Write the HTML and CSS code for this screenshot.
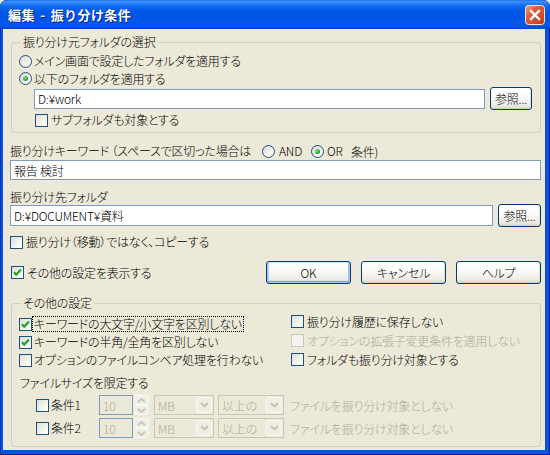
FILE: index.html
```html
<!DOCTYPE html>
<html lang="ja">
<head>
<meta charset="utf-8">
<title>編集 - 振り分け条件</title>
<link rel="stylesheet" href="styles.css">
</head>
<body>
<div class="window">
  <div class="titlebar">
    <span class="title">編集 - 振り分け条件</span>
    <span class="close">
      <svg width="20" height="20" viewBox="0 0 20 20">
        <defs>
          <linearGradient id="cg" x1="0" y1="0" x2="1" y2="1">
            <stop offset="0" stop-color="#EFA48C"/>
            <stop offset="0.35" stop-color="#DE5E3C"/>
            <stop offset="1" stop-color="#C23A17"/>
          </linearGradient>
        </defs>
        <rect x="0.5" y="0.5" width="19" height="19" rx="3" fill="url(#cg)" stroke="#F4E4DE"/>
        <path d="M6 6 L14 14 M14 6 L6 14" stroke="#fff" stroke-width="2.4" stroke-linecap="square"/>
      </svg>
    </span>
  </div>
  <div class="client">
    <div class="group g1">
      <span class="gtitle">振り分け元フォルダの選択</span>
      <div class="row r1"><span class="radio"></span><span class="lbl">メイン画面で設定したフォルダを適用する</span></div>
      <div class="row r2"><span class="radio on"></span><span class="lbl">以下のフォルダを適用する</span></div>
      <div class="row r-input"><span class="edit src">D:¥work</span><span class="btn browse">参照...</span></div>
      <div class="row r-sub"><span class="check"></span><span class="lbl">サブフォルダも対象とする</span></div>
    </div>

    <div class="row kw-row">
      <span class="kw-label">振り分けキーワード （スペースで区切った場合は</span>
      <span class="radio"></span><span class="lat and">AND</span>
      <span class="radio on"></span><span class="lat or">OR</span>
      <span class="kw-tail">条件)</span>
    </div>
    <span class="edit kw">報告 検討</span>

    <div class="row dest-label">振り分け先フォルダ</div>
    <div class="row dest-row"><span class="edit dest">D:¥DOCUMENT¥資料</span><span class="btn browse dbrowse">参照...</span></div>

    <div class="row copy-row"><span class="check"></span><span class="lbl">振り分け（移動）ではなく、コピーする</span></div>

    <div class="row action-row">
      <div class="show-other"><span class="check"><svg width="11" height="11" viewBox="0 0 11 11"><path d="M2 5.2 L4.2 7.6 L9 2.6" fill="none" stroke="#21A121" stroke-width="2.1"/></svg></span><span class="lbl">その他の設定を表示する</span></div>
      <div class="buttons">
        <span class="btn push default">OK</span>
        <span class="btn push">キャンセル</span>
        <span class="btn push">ヘルプ</span>
      </div>
    </div>

    <div class="group g2">
      <span class="gtitle">その他の設定</span>
      <div class="cols">
        <div class="col left">
          <div class="row opt"><span class="check"><svg width="11" height="11" viewBox="0 0 11 11"><path d="M2 5.2 L4.2 7.6 L9 2.6" fill="none" stroke="#21A121" stroke-width="2.1"/></svg></span><span class="lbl focus">キーワードの大文字/小文字を区別しない</span></div>
          <div class="row opt"><span class="check"><svg width="11" height="11" viewBox="0 0 11 11"><path d="M2 5.2 L4.2 7.6 L9 2.6" fill="none" stroke="#21A121" stroke-width="2.1"/></svg></span><span class="lbl">キーワードの半角/全角を区別しない</span></div>
          <div class="row opt"><span class="check"></span><span class="lbl">オプションのファイルコンベア処理を行わない</span></div>
        </div>
        <div class="col right">
          <div class="row opt"><span class="check"></span><span class="lbl">振り分け履歴に保存しない</span></div>
          <div class="row opt disabled"><span class="check"></span><span class="lbl">オプションの拡張子変更条件を適用しない</span></div>
          <div class="row opt"><span class="check"></span><span class="lbl">フォルダも振り分け対象とする</span></div>
        </div>
      </div>
      <div class="row size-label">ファイルサイズを限定する</div>
      <div class="row cond first">
        <div class="cond-label"><span class="check"></span><span class="lbl">条件1</span></div>
        <span class="edit num">10</span>
        <span class="spin"><span class="sb"><svg width="9" height="5" viewBox="0 0 9 5"><path d="M1 4.2 L4.5 1 L8 4.2" fill="none" stroke="#C4C1B2" stroke-width="1.6"/></svg></span><span class="sb"><svg width="9" height="5" viewBox="0 0 9 5"><path d="M1 0.8 L4.5 4 L8 0.8" fill="none" stroke="#C4C1B2" stroke-width="1.6"/></svg></span></span>
        <span class="combo unit"><span class="ctext">MB</span><span class="cbtn"><svg width="9" height="6" viewBox="0 0 9 6"><path d="M1 1 L4.5 4.5 L8 1" fill="none" stroke="#C4C1B2" stroke-width="1.8"/></svg></span></span>
        <span class="combo cmp"><span class="ctext">以上の</span><span class="cbtn"><svg width="9" height="6" viewBox="0 0 9 6"><path d="M1 1 L4.5 4.5 L8 1" fill="none" stroke="#C4C1B2" stroke-width="1.8"/></svg></span></span>
        <span class="dis-text">ファイルを振り分け対象としない</span>
      </div>
      <div class="row cond">
        <div class="cond-label"><span class="check"></span><span class="lbl">条件2</span></div>
        <span class="edit num">10</span>
        <span class="spin"><span class="sb"><svg width="9" height="5" viewBox="0 0 9 5"><path d="M1 4.2 L4.5 1 L8 4.2" fill="none" stroke="#C4C1B2" stroke-width="1.6"/></svg></span><span class="sb"><svg width="9" height="5" viewBox="0 0 9 5"><path d="M1 0.8 L4.5 4 L8 0.8" fill="none" stroke="#C4C1B2" stroke-width="1.6"/></svg></span></span>
        <span class="combo unit"><span class="ctext">MB</span><span class="cbtn"><svg width="9" height="6" viewBox="0 0 9 6"><path d="M1 1 L4.5 4.5 L8 1" fill="none" stroke="#C4C1B2" stroke-width="1.8"/></svg></span></span>
        <span class="combo cmp"><span class="ctext">以上の</span><span class="cbtn"><svg width="9" height="6" viewBox="0 0 9 6"><path d="M1 1 L4.5 4.5 L8 1" fill="none" stroke="#C4C1B2" stroke-width="1.8"/></svg></span></span>
        <span class="dis-text">ファイルを振り分け対象としない</span>
      </div>
    </div>
  </div>
</div>
</body>
</html>
```

FILE: styles.css
```css
* { box-sizing: border-box; }
html, body { margin: 0; padding: 0; background: #ECE9D8; }
body {
  font-family: "Noto Sans CJK JP", "Noto Sans", sans-serif;
  font-size: 12px;
  font-weight: 300;
  color: #000;
  font-feature-settings: "palt" 1;
  letter-spacing: -0.2px;
}
.window {
  width: 550px;
  height: 455px;
  display: flex;
  flex-direction: column;
  background: #0553E2;
  border-radius: 7px 7px 0 0;
  box-shadow: inset 1px 0 0 #0831B8, inset -1px 0 0 #001EA0, inset 0 -1px 0 #001EA0;
}
.titlebar {
  height: 29px;
  flex: none;
  display: flex;
  align-items: center;
  justify-content: space-between;
  padding: 0 5px 0 8px;
  border-radius: 7px 7px 0 0;
  background: linear-gradient(to bottom, #0A5CE4 0, #3E93FB 1px, #2D83F5 3px, #0C63EC 7px, #0058E8 12px, #0055E5 18px, #0059EB 24px, #004ED8 28px, #003FC0 29px);
}
.title {
  color: #fff;
  font-weight: bold;
  font-size: 13px;
  font-feature-settings: normal;
  letter-spacing: 0.4px;
  word-spacing: 2px;
  text-shadow: 1px 1px 0 #0A1E8A;
  line-height: 15px;
  margin-top: -1px;
}
.close { display: flex; width: 20px; height: 20px; margin-top: 1px; }
.client {
  flex: 1;
  margin: 0 5px 5px 3px;
  background: #ECE9D8;
  padding: 0 4px 0 7px;
  display: flex;
  flex-direction: column;
}
.row { display: flex; align-items: center; }
.lbl { white-space: nowrap; line-height: 14px; }

/* group boxes */
.group {
  position: relative;
  margin-left: 1px;
  border: 1px solid #D0D0BF;
  border-radius: 3px;
}
.gtitle {
  position: absolute;
  top: -8px;
  left: 9px;
  padding: 0 2px;
  background: #ECE9D8;
  line-height: 14px;
  white-space: nowrap;
}
.g1 { margin-top: 13px; padding: 9px 0 3px 0; }
.g1 .r1 { height: 18px; padding-left: 7px; gap: 2px; }
.g1 .r2 { height: 17px; padding-left: 7px; gap: 2px; }
.r-input { height: 23px; padding-left: 22px; gap: 5px; }
.r-sub { margin-top: 1px; height: 18px; padding-left: 23px; gap: 3px; }

/* controls */
.radio {
  flex: none;
  position: relative;
  width: 13px;
  height: 13px;
  border-radius: 50%;
  border: 1px solid #1C5180;
  background: linear-gradient(135deg, #D8D8D2 0%, #F3F3EF 60%, #FFFFFF 100%);
}
.radio.on::after {
  content: "";
  position: absolute;
  left: 3px;
  top: 3px;
  width: 5px;
  height: 5px;
  border-radius: 50%;
  background: radial-gradient(circle at 35% 35%, #8AEA8A 0, #35B535 45%, #168516 100%);
}
.check {
  flex: none;
  display: flex;
  align-items: center;
  justify-content: center;
  width: 13px;
  height: 13px;
  border: 1px solid #1C5180;
  background: linear-gradient(135deg, #DCDCD7 0%, #F5F5F2 60%, #FFFFFF 100%);
}
.edit {
  display: flex;
  align-items: center;
  flex: none;
  height: 20px;
  border: 1px solid #7F9DB9;
  background: #fff;
  padding-left: 3px;
  white-space: nowrap;
}
.edit.src { width: 451px; }
.btn {
  flex: none;
  display: flex;
  align-items: center;
  justify-content: center;
  height: 23px;
  border: 1px solid #003C74;
  border-radius: 3px;
  background: linear-gradient(to bottom, #FFFFFF 0%, #FAFAF8 40%, #EEEDE6 80%, #DAD6CB 100%);
  box-shadow: inset 0 -1px 0 #D6D0C5, inset -1px 0 0 #E3E0D6;
  white-space: nowrap;
}
.browse { width: 42px; }

/* keyword */
.kw-row { margin-top: 9px; height: 18px; }
.kw-label { width: 252px; flex: none; white-space: nowrap; line-height: 14px; }
.lat { line-height: 14px; }
.and { width: 36px; padding-left: 4px; flex: none; }
.or { width: 27px; padding-left: 3px; flex: none; }
.kw-tail { white-space: nowrap; }
.edit.kw { width: 531px; height: 20px; }

.dest-label { margin-top: 10px; height: 14px; line-height: 14px; }
.dest-row { height: 23px; gap: 5px; }
.edit.dest { width: 483px; height: 21px; }
.dbrowse { width: 43px; }

.copy-row { margin-top: 6px; height: 18px; gap: 3px; }

.action-row { margin-top: 10px; height: 23px; justify-content: space-between; }
.show-other { display: flex; align-items: center; gap: 3px; padding-left: 1px; }
.buttons { display: flex; gap: 10px; }
.push { width: 85px; }
.push.default {
  box-shadow: inset 0 1px 0 #CEE7FF, inset 0 0 0 1px #A9C4F5, inset 0 -2px 0 #7D9DEC, inset 2px 0 0 #B5CDF7, inset -2px 0 0 #A0BCF3;
}

/* group 2 */
.g2 { margin-top: 19px; padding-bottom: 8px; }
.cols { display: grid; grid-template-columns: 279px 1fr; }
.col.left { padding-top: 11px; padding-left: 7px; }
.col.left .opt { height: 18px; gap: 1px; }
.col.left .lbl { padding: 0 1px; }
.col.right { padding-top: 8px; }
.col.right .opt { height: 19px; gap: 3px; }
.focus { outline: 1px dotted #000; outline-offset: 0; line-height: 14px; }
.disabled .check { border-color: #C9C7BA; background: #F4F3EE; }
.disabled .lbl { color: #ACA899; }

.size-label { margin-top: 7px; height: 14px; line-height: 14px; padding-left: 8px; }
.cond { height: 20px; margin-top: 3px; padding-left: 24px; }
.cond.first { margin-top: 5px; }
.cond-label { width: 63px; flex: none; display: flex; align-items: center; gap: 2px; }
.edit.num {
  width: 34px;
  background: #ECE9D8;
  color: #ACA899;
}
.spin {
  flex: none;
  margin-left: 1px;
  width: 15px;
  height: 20px;
  display: flex;
  flex-direction: column;
}
.sb {
  flex: 1;
  display: flex;
  align-items: center;
  justify-content: center;
  border: 1px solid #FAF9F4;
  border-radius: 2px;
  background: #EFEDE4;
}
.combo {
  flex: none;
  display: flex;
  align-items: center;
  justify-content: space-between;
  height: 20px;
  border: 1px solid #C9C7BA;
  background: #ECE9D8;
  padding: 1px;
}
.combo.unit { width: 60px; margin-left: 5px; }
.combo.cmp { width: 66px; margin-left: 4px; }
.ctext { color: #ACA899; padding-left: 2px; white-space: nowrap; }
.cbtn {
  width: 16px;
  height: 100%;
  display: flex;
  align-items: center;
  justify-content: center;
  border: 1px solid #FAF9F4;
  border-radius: 2px;
  background: #EFEDE4;
}
.dis-text { margin-left: 6px; color: #ACA899; white-space: nowrap; }
```
